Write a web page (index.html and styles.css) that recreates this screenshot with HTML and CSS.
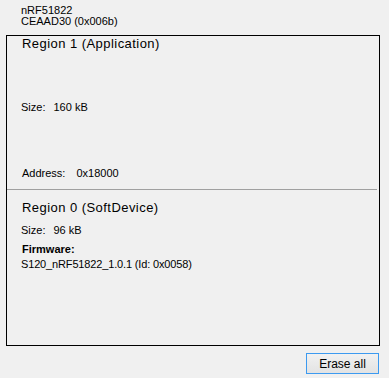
FILE: index.html
```html
<!DOCTYPE html>
<html>
<head>
<meta charset="utf-8">
<link rel="stylesheet" href="styles.css">
</head>
<body>
<div class="page">
  <div class="device">
    <div class="line">nRF51822</div>
    <div class="line">CEAAD30 (0x006b)</div>
  </div>
  <div class="memory">
    <section class="region region-app">
      <div class="title">Region 1 (Application)</div>
      <div class="line size-app"><span>Size:</span><span class="val-size">160 kB</span></div>
      <div class="line addr"><span>Address:</span><span class="val-addr">0x18000</span></div>
    </section>
    <div class="divider"></div>
    <section class="region region-sd">
      <div class="title">Region 0 (SoftDevice)</div>
      <div class="line size-sd"><span>Size:</span><span class="val-size">96 kB</span></div>
      <div class="line fw-label">Firmware:</div>
      <div class="line fw-name">S120_nRF51822_1.0.1 (Id: 0x0058)</div>
    </section>
  </div>
  <div class="actions">
    <button class="btn">Erase all</button>
  </div>
</div>
</body>
</html>
```

FILE: styles.css
```css
html, body {
  margin: 0;
  padding: 0;
  background: #f0f0f0;
}
body {
  font-family: "Liberation Sans", Arial, sans-serif;
  font-size: 11px;
  color: #000;
  width: 389px;
  height: 378px;
  overflow: hidden;
}
.page {
  display: flex;
  flex-direction: column;
}
.device {
  padding: 5px 0 0 21px;
  height: 25px;
}
.device .line {
  line-height: 11px;
}
.line {
  line-height: 12px;
  white-space: nowrap;
}
.memory {
  margin: 5px 9px 0 6px;
  border: 1px solid #000;
  height: 309px;
  display: flex;
  flex-direction: column;
}
.region {
  padding-left: 15px;
  display: flex;
  flex-direction: column;
}
.title {
  font-size: 13px;
  line-height: 16px;
  letter-spacing: 0.45px;
}
.region-app .title { margin-top: 0; }
.size-app { margin-top: 49px; padding-left: 0; margin-left: -1px; }
.addr { margin-top: 54px; }
.val-size { margin-left: 8px; }
.val-addr { margin-left: 11px; }
.divider {
  margin: 10px 2px 0 0;
  height: 1px;
  background: #a0a0a0;
}
.region-sd .title { margin-top: 10px; }
.size-sd { margin-top: 8px; margin-left: -1px; }
.fw-label { margin-top: 7px; font-weight: bold; }
.fw-name { margin-top: 3px; margin-left: -1px; letter-spacing: -0.15px; }
.actions {
  display: flex;
  justify-content: flex-end;
  padding: 7px 10px 0 0;
}
.btn {
  width: 73px;
  height: 21px;
  margin: 0;
  padding: 0;
  border: 1px solid #3c9af0;
  background: linear-gradient(#f1f1f1, #e3e3e3);
  font-family: "Liberation Sans", Arial, sans-serif;
  font-size: 12px;
  color: #000;
}
```
